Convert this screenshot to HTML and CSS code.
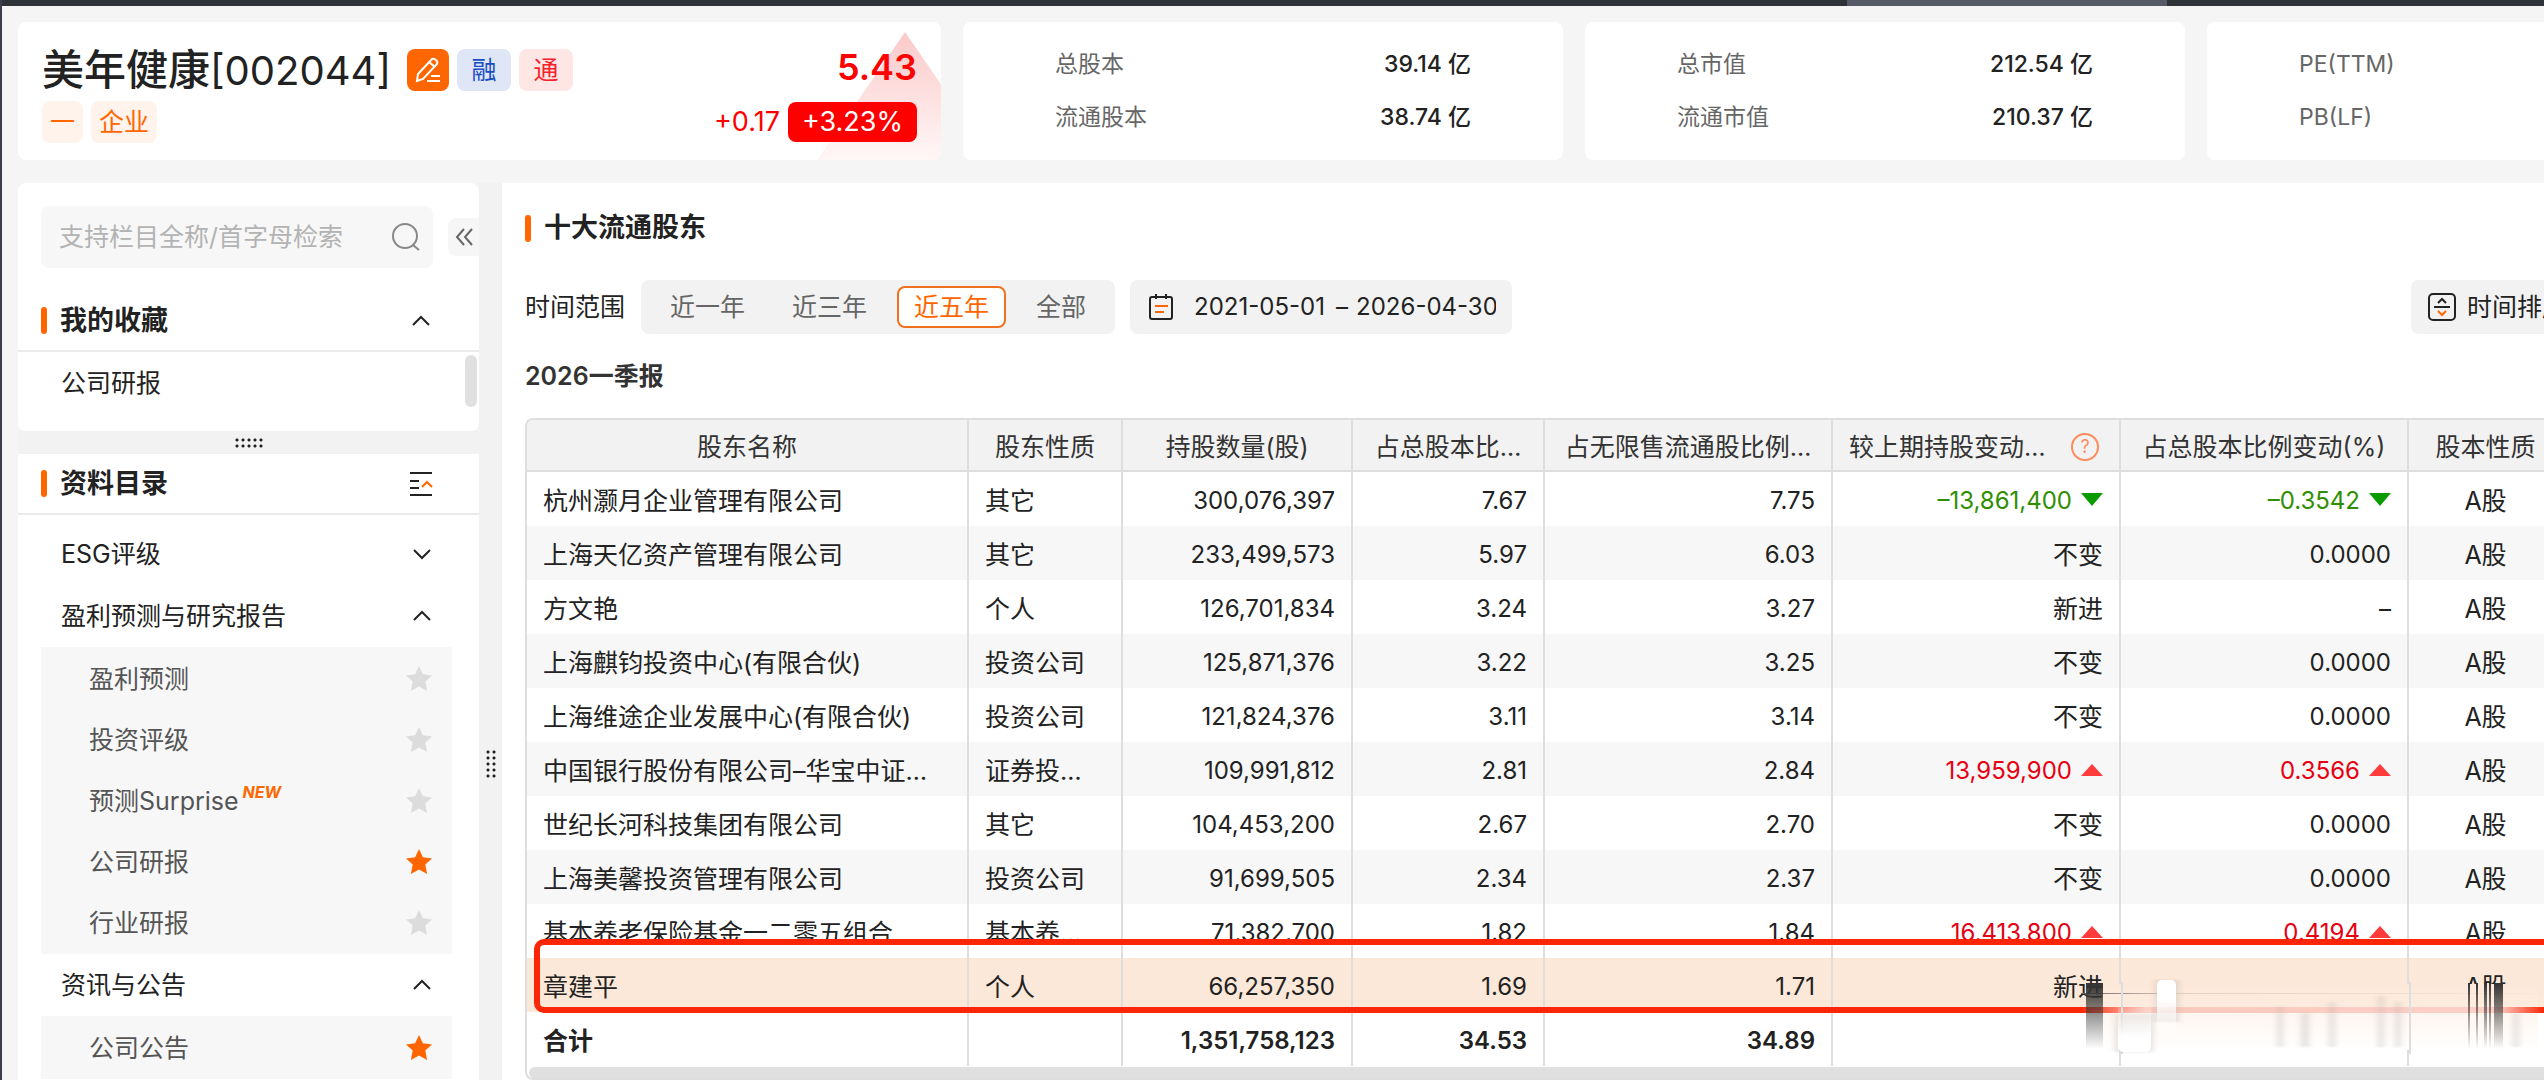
FILE: index.html
```html
<!DOCTYPE html>
<html lang="zh-CN">
<head>
    <meta charset="UTF-8">
    <meta name="viewport" content="width=device-width, initial-scale=1.0">
    <title>美年健康[002044] 十大流通股东</title>
    <link rel="stylesheet" href="styles.css">
</head>
<body>
    <svg class="sprite" aria-hidden="true">
        <symbol id="star" viewBox="0 0 28 28"><path d="M14 1l3.9 8.3 9.1 1.1-6.7 6.2 1.8 9.4-8.1-4.4L5.900 26l1.800-9.400L1 10.400l9.100-1.100z"/></symbol>
        <symbol id="up" viewBox="0 0 20 12"><path d="M2 10l8-8 8 8"/></symbol>
        <symbol id="down" viewBox="0 0 20 12"><path d="M2 2l8 8 8-8"/></symbol>
    </svg>

    <div class="page">
        <div class="topbar"><div class="topbar-tab"></div></div>

        <header class="summary">
            <section class="card stock">
                <svg class="stock-arrow" viewBox="0 0 124 128" aria-hidden="true">
                    <defs>
                        <linearGradient id="rise" x1="0" y1="0" x2="0" y2="1">
                            <stop offset="0" stop-color="#fbc9c9"/>
                            <stop offset="1" stop-color="#fff7f7"/>
                        </linearGradient>
                    </defs>
                    <path d="M88 0L0 128h176z" fill="url(#rise)"/>
                </svg>
                <div class="stock-info">
                    <div class="stock-row">
                        <h1>美年健康<span class="code">[002044]</span></h1>
                        <button class="tag edit" aria-label="编辑">
                            <svg width="28" height="28" viewBox="0 0 28 28"><path d="M3 25l1-7L18 3q2-1 4 1t1 4L9 23zM15 6l6 5M17 20h9M13 25h13"/></svg>
                        </button>
                        <span class="tag blue">融</span>
                        <span class="tag red">通</span>
                    </div>
                    <div class="stock-row second">
                        <span class="tag orange">一</span>
                        <span class="tag orange">企业</span>
                    </div>
                </div>
                <div class="stock-price">
                    <div class="price">5.43</div>
                    <div class="change"><span>+0.17</span><span class="percent">+3.23%</span></div>
                </div>
            </section>
            <dl class="card figures">
                <div><dt>总股本</dt><dd>39.14 亿</dd></div>
                <div><dt>流通股本</dt><dd>38.74 亿</dd></div>
            </dl>
            <dl class="card figures">
                <div><dt>总市值</dt><dd>212.54 亿</dd></div>
                <div><dt>流通市值</dt><dd>210.37 亿</dd></div>
            </dl>
            <dl class="card figures">
                <div><dt>PE(TTM)</dt></div>
                <div><dt>PB(LF)</dt></div>
            </dl>
        </header>

        <div class="workspace">
            <aside class="sidebar">
                <section class="panel favorites">
                    <div class="search-row">
                        <div class="search">
                            <input type="text" placeholder="支持栏目全称/首字母检索" aria-label="检索栏目">
                            <svg width="30" height="30" viewBox="0 0 30 30"><circle cx="14" cy="14" r="12"/><path d="M22 23l6 5"/></svg>
                        </div>
                        <button class="collapse" aria-label="收起">
                            <svg width="18" height="18" viewBox="0 0 18 18"><path d="M9 1L2 9l7 8M17 1l-7 8 7 8"/></svg>
                        </button>
                    </div>
                    <div class="side-head">
                        <h2>我的收藏</h2>
                        <button aria-label="收起收藏"><svg class="chevron"><use href="#up"/></svg></button>
                    </div>
                    <div class="favorite-list">
                        <a href="#reports">公司研报</a>
                        <div class="scroll-thumb"></div>
                    </div>
                </section>
                <div class="row-resizer"><div class="dots"></div></div>
                <section class="panel catalog">
                    <div class="side-head">
                        <h2>资料目录</h2>
                        <button aria-label="全部收起">
                            <svg class="fold" width="24" height="24" viewBox="0 0 24 24"><path d="M1 1h22M1 9h9M1 16h9M1 23h22"/><path class="accent" d="M13 15l5-5 5 5"/></svg>
                        </button>
                    </div>
                    <nav>
                        <button class="group">ESG评级<svg class="chevron"><use href="#down"/></svg></button>
                        <button class="group">盈利预测与研究报告<svg class="chevron"><use href="#up"/></svg></button>
                        <ul>
                            <li><a href="#forecast">盈利预测</a><svg class="star"><use href="#star"/></svg></li>
                            <li><a href="#rating">投资评级</a><svg class="star"><use href="#star"/></svg></li>
                            <li><a href="#surprise">预测Surprise<em>NEW</em></a><svg class="star"><use href="#star"/></svg></li>
                            <li><a href="#reports">公司研报</a><svg class="star on"><use href="#star"/></svg></li>
                            <li><a href="#industry">行业研报</a><svg class="star"><use href="#star"/></svg></li>
                        </ul>
                        <button class="group">资讯与公告<svg class="chevron"><use href="#up"/></svg></button>
                        <ul>
                            <li><a href="#notices">公司公告</a><svg class="star on"><use href="#star"/></svg></li>
                        </ul>
                    </nav>
                </section>
            </aside>

            <div class="col-resizer"><div class="dots"></div></div>

            <main>
                <h2>十大流通股东</h2>
                <div class="toolbar">
                    <span>时间范围</span>
                    <div class="ranges">
                        <button>近一年</button>
                        <button>近三年</button>
                        <button class="active">近五年</button>
                        <button>全部</button>
                    </div>
                    <div class="dates">
                        <svg width="26" height="28" viewBox="0 0 26 28"><rect x="2" y="4" width="22" height="22" rx="2"/><path d="M8 1v5M18 1v5"/><path class="accent" d="M7 13h13M7 19h9"/></svg>
                        <input type="text" value="2021-05-01" aria-label="开始日期">
                        <span>–</span>
                        <input type="text" value="2026-04-30" aria-label="结束日期">
                    </div>
                    <button class="sort">
                        <svg width="30" height="30" viewBox="0 0 30 30"><rect x="2" y="2" width="26" height="26" rx="4"/><path d="M7 15h16M11 11l4-4 4 4"/><path class="accent" d="M11 19l4 4 4-4"/></svg>
                        时间排序
                    </button>
                </div>
                <h3>2026一季报</h3>

                <div class="table-wrap">
                    <table>
                        <colgroup>
                            <col class="c-name"><col class="c-kind"><col class="c-count"><col class="c-ratio">
                            <col class="c-wide"><col class="c-wide"><col class="c-wide"><col class="c-share">
                        </colgroup>
                        <thead>
                            <tr>
                                <th>股东名称</th>
                                <th>股东性质</th>
                                <th>持股数量(股)</th>
                                <th>占总股本比…</th>
                                <th>占无限售流通股比例…</th>
                                <th>
                                    <div class="with-help">
                                        <span>较上期持股变动…</span>
                                        <button class="help" aria-label="说明">?</button>
                                    </div>
                                </th>
                                <th>占总股本比例变动(%)</th>
                                <th>股本性质</th>
                            </tr>
                        </thead>
                        <tbody>
                            <tr><td>杭州灏月企业管理有限公司</td><td>其它</td><td class="num">300,076,397</td><td class="num">7.67</td><td class="num">7.75</td><td class="num fall">–13,861,400</td><td class="num fall">–0.3542</td><td>A股</td></tr>
                            <tr><td>上海天亿资产管理有限公司</td><td>其它</td><td class="num">233,499,573</td><td class="num">5.97</td><td class="num">6.03</td><td class="state">不变</td><td class="num">0.0000</td><td>A股</td></tr>
                            <tr><td>方文艳</td><td>个人</td><td class="num">126,701,834</td><td class="num">3.24</td><td class="num">3.27</td><td class="state">新进</td><td class="num">–</td><td>A股</td></tr>
                            <tr><td>上海麒钧投资中心(有限合伙)</td><td>投资公司</td><td class="num">125,871,376</td><td class="num">3.22</td><td class="num">3.25</td><td class="state">不变</td><td class="num">0.0000</td><td>A股</td></tr>
                            <tr><td>上海维途企业发展中心(有限合伙)</td><td>投资公司</td><td class="num">121,824,376</td><td class="num">3.11</td><td class="num">3.14</td><td class="state">不变</td><td class="num">0.0000</td><td>A股</td></tr>
                            <tr><td>中国银行股份有限公司–华宝中证…</td><td>证券投…</td><td class="num">109,991,812</td><td class="num">2.81</td><td class="num">2.84</td><td class="num rise">13,959,900</td><td class="num rise">0.3566</td><td>A股</td></tr>
                            <tr><td>世纪长河科技集团有限公司</td><td>其它</td><td class="num">104,453,200</td><td class="num">2.67</td><td class="num">2.70</td><td class="state">不变</td><td class="num">0.0000</td><td>A股</td></tr>
                            <tr><td>上海美馨投资管理有限公司</td><td>投资公司</td><td class="num">91,699,505</td><td class="num">2.34</td><td class="num">2.37</td><td class="state">不变</td><td class="num">0.0000</td><td>A股</td></tr>
                            <tr><td>基本养老保险基金一二零五组合</td><td>基本养…</td><td class="num">71,382,700</td><td class="num">1.82</td><td class="num">1.84</td><td class="num rise">16,413,800</td><td class="num rise">0.4194</td><td>A股</td></tr>
                            <tr class="selected"><td>章建平</td><td>个人</td><td class="num">66,257,350</td><td class="num">1.69</td><td class="num">1.71</td><td class="state">新进</td><td class="num"></td><td>A股</td></tr>
                            <tr class="total"><td>合计</td><td></td><td class="num">1,351,758,123</td><td class="num">34.53</td><td class="num">34.89</td><td></td><td></td><td></td></tr>
                        </tbody>
                    </table>
                    <div class="table-scroll"></div>
                    <div class="marker"></div>
                    <svg class="smear" viewBox="0 0 463 84" aria-hidden="true">
                        <defs>
                            <linearGradient id="haze" x1="0" y1="0" x2="0" y2="1">
                                <stop offset="0" stop-color="#fce8d9"/>
                                <stop offset="0.350" stop-color="#fdecdf"/>
                                <stop offset="0.450" stop-color="#fef6f0"/>
                                <stop offset="1" stop-color="#ffffff"/>
                            </linearGradient>
                            <linearGradient id="edge">
                                <stop offset="0" stop-color="#fb2607"/>
                                <stop offset="0.140" stop-color="#fcc8bc"/>
                                <stop offset="0.900" stop-color="#fcd0c6"/>
                                <stop offset="1" stop-color="#fb2607"/>
                            </linearGradient>
                            <linearGradient id="ink" x1="0" y1="0" x2="0" y2="1">
                                <stop offset="0" stop-color="#333333"/>
                                <stop offset="0.500" stop-color="#333333" stop-opacity="0.500"/>
                                <stop offset="1" stop-color="#333333" stop-opacity="0"/>
                            </linearGradient>
                            <linearGradient id="line">
                                <stop offset="0" stop-color="#6b6460"/>
                                <stop offset="0.200" stop-color="#e0d0c4"/>
                                <stop offset="1" stop-color="#fbe7d8"/>
                            </linearGradient>
                            <linearGradient id="pillTop" x1="0" y1="0" x2="0" y2="1">
                                <stop offset="0.300" stop-color="#ffffff"/>
                                <stop offset="1" stop-color="#ffffff" stop-opacity="0"/>
                            </linearGradient>
                            <linearGradient id="pillBottom" x1="0" y1="0" x2="0" y2="1">
                                <stop offset="0" stop-color="#ffffff" stop-opacity="0"/>
                                <stop offset="0.700" stop-color="#ffffff"/>
                            </linearGradient>
                            <filter id="soft"><feGaussianBlur stdDeviation="3 1"/></filter>
                        </defs>
                        <rect x="22" y="12" width="435" height="66" fill="url(#haze)"/>
                        <rect x="0" y="35" width="463" height="6" fill="url(#edge)"/>
                        <rect x="0" y="21" width="463" height="1" fill="url(#line)"/>
                        <path d="M41 10v72M329 10v72" stroke="#dedede" stroke-width="2"/>
                        <g fill="#b8aeaa" opacity="0.350" filter="url(#soft)">
                            <rect x="196" y="35" width="6" height="40"/>
                            <rect x="220" y="41" width="8" height="34"/>
                            <rect x="248" y="30" width="6" height="45"/>
                            <rect x="297" y="24" width="6" height="51"/>
                            <rect x="314" y="30" width="6" height="45"/>
                            <rect x="432" y="41" width="6" height="34"/>
                            <rect x="34" y="42" width="38" height="38"/>
                            <rect x="74" y="8" width="24" height="42"/>
                        </g>
                        <rect x="37" y="32" width="33" height="48" rx="5" fill="url(#pillBottom)"/>
                        <rect x="76" y="8" width="19" height="62" rx="5" fill="url(#pillTop)"/>
                        <g fill="url(#ink)">
                            <rect x="5" y="11" width="17" height="66"/>
                            <rect x="387" y="11" width="2" height="66"/>
                            <rect x="395" y="11" width="2" height="66"/>
                            <rect x="403" y="11" width="3" height="66"/>
                            <rect x="408" y="11" width="2" height="66"/>
                            <rect x="413" y="11" width="9" height="66"/>
                        </g>
                    </svg>
                </div>
            </main>
        </div>
    </div>
</body>
</html>
```
FILE: styles.css
```css
* {
    box-sizing: border-box;
}

body {
    margin: 0;
    height: 100vh;
    overflow: hidden;
    background-color: #f5f5f5;
    color: #222;
    font-family: Inter, "Noto Sans CJK SC", sans-serif;
    font-size: 25px;
    line-height: 36px;
}

h1, h2, h3, dl, dd, ul {
    margin: 0;
    padding: 0;
}

a {
    color: inherit;
    text-decoration: none;
}

button, input {
    margin: 0;
    padding: 0;
    border: none;
    background: none;
    color: inherit;
    font: inherit;
}

button {
    display: flex;
    align-items: center;
    cursor: pointer;
}

svg {
    flex: none;
    fill: none;
    stroke: #222;
    stroke-width: 2;
}

svg .accent {
    stroke: #f60;
}

.sprite {
    display: none;
}

.page {
    display: flex;
    flex-direction: column;
    min-width: 2585px;
    height: 100vh;
    border-left: 2px solid #3a3f4a;
}

.topbar {
    flex: none;
    height: 6px;
    background-color: #2f3338;
}

.topbar-tab {
    width: 320px;
    height: 6px;
    margin-left: 1845px;
    background-color: #555a66;
}

/* summary cards */

.summary {
    flex: none;
    display: flex;
    gap: 22px;
    height: 138px;
    margin: 16px 0 23px 16px;
}

.card {
    flex: none;
    width: 600px;
    border-radius: 8px;
    background-color: #fff;
}

.stock {
    position: relative;
    display: flex;
    justify-content: space-between;
    width: 923px;
    padding: 24px 24px 0;
    overflow: hidden;
}

.stock-arrow {
    position: absolute;
    right: 0;
    bottom: 0;
    width: 124px;
    height: 128px;
    stroke: none;
}

.stock-row {
    display: flex;
    align-items: center;
    gap: 8px;
    height: 48px;
}

.stock-row.second {
    height: 56px;
}

h1 {
    margin-right: 8px;
    font-size: 42px;
    font-weight: 500;
    line-height: 48px;
    white-space: nowrap;
}

.code {
    font-size: 40px;
    font-weight: 400;
}

.tag {
    display: flex;
    align-items: center;
    justify-content: center;
    height: 42px;
    padding: 0 8px;
    border-radius: 8px;
}

.edit {
    width: 42px;
    background-color: #f60;
}

.edit svg {
    stroke: #fff;
}

.blue {
    width: 54px;
    background-color: #dfe6f6;
    color: #1a4cc4;
}

.red {
    width: 54px;
    background-color: #fde6e4;
    color: #f5222d;
}

.orange {
    background-color: #fff3ec;
    color: #f60;
}

.stock-price {
    position: relative;
    display: flex;
    flex-direction: column;
    align-items: flex-end;
    color: #f00;
}

.price {
    height: 54px;
    font-size: 36px;
    font-weight: 600;
    line-height: 42px;
}

.change {
    display: flex;
    align-items: center;
    gap: 8px;
    height: 44px;
    font-size: 27px;
}

.percent {
    padding: 0 14px;
    border-radius: 8px;
    background-color: #f00;
    color: #fff;
    line-height: 40px;
}

.figures {
    display: flex;
    flex-direction: column;
    justify-content: flex-start;
    gap: 17px;
    padding: 24px 92px;
    font-size: 23px;
}

.figures div {
    display: flex;
    justify-content: space-between;
}

.figures dt {
    color: #666;
}

.figures dd {
    font-weight: 500;
}

/* sidebar */

.workspace {
    flex: 1;
    display: flex;
    min-height: 0;
    padding-left: 16px;
}

.sidebar {
    flex: none;
    display: flex;
    flex-direction: column;
    width: 461px;
}

.panel {
    background-color: #fff;
}

.favorites {
    flex: none;
    height: 248px;
    border-radius: 8px;
}

.search-row {
    display: flex;
    align-items: center;
    justify-content: space-between;
    padding: 23px 0 23px 23px;
}

.search {
    display: flex;
    align-items: center;
    width: 392px;
    height: 62px;
    padding: 0 12px 0 18px;
    border-radius: 8px;
    background-color: #f7f7f7;
}

.search input {
    flex: 1;
    min-width: 0;
    outline: none;
}

.search input::placeholder {
    color: #b3b3b3;
}

.search svg {
    stroke: #888;
}

.collapse {
    justify-content: center;
    width: 31px;
    height: 38px;
    border-radius: 8px 0 0 8px;
    background-color: #f6f6f6;
}

.collapse svg {
    stroke: #666;
}

.side-head {
    display: flex;
    align-items: center;
    justify-content: space-between;
    height: 61px;
    padding: 0 46px 0 23px;
    border-bottom: 2px solid #ebebeb;
}

h2 {
    display: flex;
    align-items: center;
    gap: 13px;
    font-size: 27px;
    font-weight: 600;
}

h2::before {
    content: "";
    width: 6px;
    height: 27px;
    border-radius: 3px;
    background-color: #f60;
}

.chevron {
    width: 20px;
    height: 12px;
    margin-right: 2px;
}

.favorite-list {
    display: flex;
    justify-content: space-between;
    padding: 3px 2px 0 43px;
    line-height: 57px;
}

.scroll-thumb {
    width: 12px;
    height: 52px;
    border-radius: 6px;
    background-color: #e0e0e0;
}

.row-resizer {
    flex: none;
    display: flex;
    align-items: center;
    justify-content: center;
    height: 23px;
    background-color: #f2f2f2;
}

.dots {
    width: 30px;
    height: 12px;
    background-image: radial-gradient(circle at 3px 3px, #222 1px, transparent 2px);
    background-size: 6px 6px;
}

.catalog {
    flex: 1;
    min-height: 0;
    overflow: hidden;
}

nav {
    padding: 8px 27px 0 23px;
}

.group {
    justify-content: space-between;
    width: 100%;
    height: 62px;
    padding: 0 18px 0 20px;
}

nav ul {
    padding: 1px 0;
    background-color: #f7f7f7;
    color: #555;
    list-style: none;
}

nav li {
    display: flex;
    align-items: center;
    justify-content: space-between;
    height: 61px;
    padding: 0 19px 0 48px;
}

nav em {
    margin-left: 4px;
    color: #f60;
    font-size: 16px;
    font-weight: 700;
    line-height: 16px;
    vertical-align: 12px;
}

.star {
    width: 28px;
    height: 28px;
    fill: #dcdcdc;
    stroke: none;
}

.star.on {
    fill: #f60;
}

.col-resizer {
    flex: none;
    display: flex;
    justify-content: center;
    width: 23px;
    padding-top: 566px;
    background-color: #f2f2f2;
}

.col-resizer .dots {
    width: 12px;
    height: 30px;
}

/* shareholders */

main {
    flex: 1;
    display: flex;
    flex-direction: column;
    min-width: 0;
    padding: 27px 0 0 23px;
    background-color: #fff;
}

.toolbar {
    display: flex;
    align-items: center;
    height: 54px;
    margin: 34px 0 24px;
}

.ranges, .dates, .sort {
    display: flex;
    align-items: center;
    height: 54px;
    border-radius: 8px;
    background-color: #f2f2f2;
}

.ranges {
    gap: 13px;
    margin: 0 15px 0 16px;
    padding: 0 12px;
    color: #666;
}

.ranges button {
    height: 42px;
    padding: 0 15px;
    border: 2px solid transparent;
    border-radius: 8px;
}

.ranges .active {
    border-color: #f07020;
    background-color: #fff;
    color: #f60;
}

.dates {
    padding: 0 16px 0 18px;
    font-size: 24px;
}

.dates input {
    width: 140px;
    margin-left: 20px;
}

.dates span {
    margin-left: 2px;
}

.dates span + input {
    margin-left: 8px;
}

.sort {
    gap: 10px;
    margin-left: auto;
    padding: 0 18px 0 16px;
    white-space: nowrap;
}

h3 {
    margin-bottom: 24px;
    color: #333;
    font-size: 25px;
    font-weight: 600;
}

.table-wrap {
    position: relative;
    flex: 1;
    min-height: 0;
    overflow: hidden;
    border: 2px solid #dedede;
    border-right: none;
    border-radius: 8px 0 0 8px;
}

table {
    width: 2037px;
    border-collapse: separate;
    border-spacing: 0;
    table-layout: fixed;
}

.c-name { width: 442px; }
.c-kind { width: 154px; }
.c-count { width: 230px; }
.c-ratio { width: 192px; }
.c-wide { width: 288px; }
.c-share { width: 155px; }

th, td {
    height: 54px;
    padding: 3px 16px 0;
    border-right: 2px solid #dedede;
    text-align: left;
    white-space: nowrap;
}

th {
    height: 52px;
    border-bottom: 2px solid #dedede;
    background-color: #f2f2f2;
    color: #333;
    font-weight: 400;
    text-align: center;
}

tbody tr:nth-child(even) {
    background-color: #f7f7f7;
}

tbody tr.selected {
    background-color: #fce8d9;
}

.total {
    font-weight: 600;
}

.num {
    font-size: 24px;
}

.num, .state {
    text-align: right;
}

td:last-child {
    text-align: center;
}

.fall {
    color: #2f8f00;
}

.rise {
    color: #e60012;
}

.fall::after, .rise::after {
    content: "";
    display: inline-block;
    margin-left: 9px;
    border: 11px solid transparent;
    vertical-align: 3px;
}

.fall::after {
    border-top: 13px solid #0a9b00;
    border-bottom-width: 0;
}

.rise::after {
    border-bottom: 12px solid #ff3b3b;
    border-top-width: 0;
}

.with-help {
    display: flex;
    align-items: center;
    justify-content: space-between;
    padding-right: 4px;
}

.help {
    flex: none;
    justify-content: center;
    width: 28px;
    height: 28px;
    border: 2px solid #ff8a5c;
    border-radius: 50%;
    color: #ff8a5c;
    font-size: 18px;
    line-height: 24px;
}

.table-scroll {
    height: 12px;
    margin: 1px 0 0 2px;
    border-radius: 6px 0 0 6px;
    background-color: #e0e0e0;
}

/* frame drawn over the selected shareholder */

.marker {
    position: absolute;
    top: 519px;
    left: 7px;
    right: -20px;
    height: 74px;
    border: 6px solid #fb2607;
    border-radius: 10px;
}

.smear {
    position: absolute;
    top: 552px;
    left: 1554px;
    width: 463px;
    height: 84px;
    stroke: none;
}
```
